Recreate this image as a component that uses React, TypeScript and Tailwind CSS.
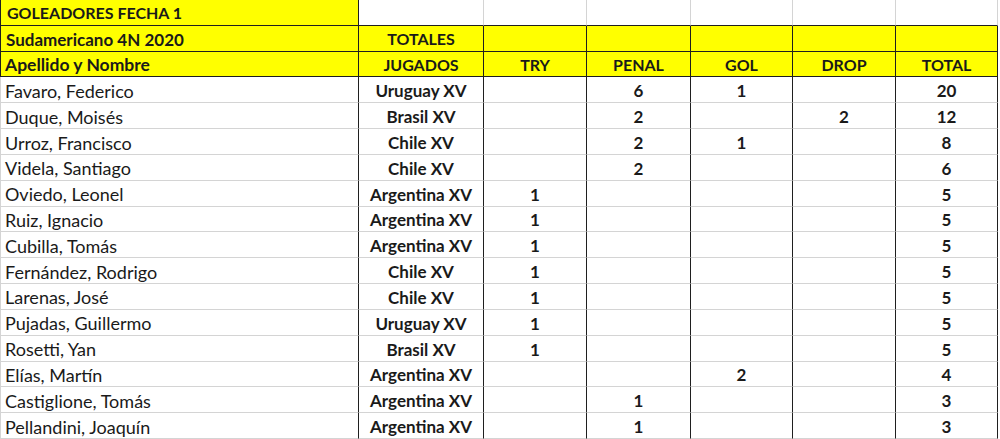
const COLS = "grid-cols-[359px_125px_103px_104px_102px_103px_102px]";

type Row = {
  name: string;
  team: string;
  try?: string;
  penal?: string;
  gol?: string;
  drop?: string;
  total: string;
};

const ROWS: Row[] = [
  { name: "Favaro, Federico", team: "Uruguay XV", penal: "6", gol: "1", total: "20" },
  { name: "Duque, Moisés", team: "Brasil XV", penal: "2", drop: "2", total: "12" },
  { name: "Urroz, Francisco", team: "Chile XV", penal: "2", gol: "1", total: "8" },
  { name: "Videla, Santiago", team: "Chile XV", penal: "2", total: "6" },
  { name: "Oviedo, Leonel", team: "Argentina XV", try: "1", total: "5" },
  { name: "Ruiz, Ignacio", team: "Argentina XV", try: "1", total: "5" },
  { name: "Cubilla, Tomás", team: "Argentina XV", try: "1", total: "5" },
  { name: "Fernández, Rodrigo", team: "Chile XV", try: "1", total: "5" },
  { name: "Larenas, José", team: "Chile XV", try: "1", total: "5" },
  { name: "Pujadas, Guillermo", team: "Uruguay XV", try: "1", total: "5" },
  { name: "Rosetti, Yan", team: "Brasil XV", try: "1", total: "5" },
  { name: "Elías, Martín", team: "Argentina XV", gol: "2", total: "4" },
  { name: "Castiglione, Tomás", team: "Argentina XV", penal: "1", total: "3" },
  { name: "Pellandini, Joaquín", team: "Argentina XV", penal: "1", total: "3" },
];

const HEAD = ["TRY", "PENAL", "GOL", "DROP", "TOTAL"];

// celdas amarillas del encabezado
const yellowCell =
  "flex items-center bg-[#ffff00] border-r border-b border-[#1f1f1f] pt-[2px] font-bold";
const dataCell =
  "flex items-center justify-center border-r border-b border-r-[#1f1f1f] border-b-[#d4d4d4] pt-[2px] font-bold text-[17px]";
const blankTop = "border-r border-b border-r-[#d4d4d4] border-b-[#1f1f1f]";

export default function App() {
  return (
    <div
      className="h-[439px] w-[1000px] overflow-hidden bg-white text-[17px] leading-none text-[#1a1a1a]"
      style={{ fontFamily: "Lato, 'Open Sans', sans-serif" }}
    >
      <div className={`grid ${COLS} grid-rows-[repeat(17,1fr)] h-[439px]`}>
        {/* fila 1: título */}
        <div className={`${yellowCell} border-l pl-[6px] text-[16px]`}>GOLEADORES FECHA 1</div>
        <div className={blankTop} />
        <div className={blankTop} />
        <div className={blankTop} />
        <div className={blankTop} />
        <div className={blankTop} />
        <div className={blankTop} />

        {/* fila 2 */}
        <div className={`${yellowCell} border-l pl-[5px] text-[17px]`}>Sudamericano 4N 2020</div>
        <div className={`${yellowCell} justify-center text-[16px]`}>TOTALES</div>
        <div className={yellowCell} />
        <div className={yellowCell} />
        <div className={yellowCell} />
        <div className={yellowCell} />
        <div className={yellowCell} />

        {/* fila 3 */}
        <div className={`${yellowCell} border-l pl-[4px] text-[17.5px]`}>Apellido y Nombre</div>
        <div className={`${yellowCell} justify-center text-[16px]`}>JUGADOS</div>
        {HEAD.map((h) => (
          <div key={h} className={`${yellowCell} justify-center text-[16px]`}>
            {h}
          </div>
        ))}

        {ROWS.map((r) => (
          <Fila key={r.name} row={r} />
        ))}
      </div>
    </div>
  );
}

function Fila({ row }: { row: Row }) {
  return (
    <>
      <div className="flex items-center border-l border-r border-b border-l-[#d4d4d4] border-r-[#1f1f1f] border-b-[#d4d4d4] pl-[4px] pt-[2px] text-[18px]">
        {row.name}
      </div>
      <div className={dataCell}>{row.team}</div>
      <div className={dataCell}>{row.try}</div>
      <div className={dataCell}>{row.penal}</div>
      <div className={dataCell}>{row.gol}</div>
      <div className={dataCell}>{row.drop}</div>
      <div className={dataCell}>{row.total}</div>
    </>
  );
}
